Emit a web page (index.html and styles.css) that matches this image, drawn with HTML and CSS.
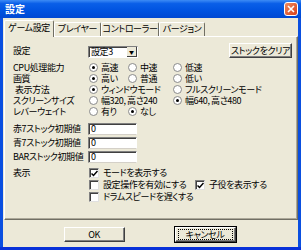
FILE: index.html
```html
<!DOCTYPE html>
<html lang="ja">
<head>
    <meta charset="UTF-8">
    <title>設定</title>
    <link rel="stylesheet" href="styles.css">
</head>
<body>
    <div class="window">
        <div class="titlebar">
            <span class="title">設定</span>
            <span class="close">
                <svg width="8" height="8" viewBox="0 0 8 8"><path d="M1 1L7 7M7 1L1 7" stroke="#fff" stroke-width="1.6"/></svg>
            </span>
        </div>
        <div class="content">
            <div class="tabs">
                <div class="tab active w1">ゲーム設定</div>
                <div class="tab w2">プレイヤー</div>
                <div class="tab w3">コントローラー</div>
                <div class="tab w4">バージョン</div>
            </div>
            <div class="panel">
                <div class="row top">
                    <span class="label">設定</span>
                    <span class="combo"><span class="combo-text">設定3</span><span class="combo-btn">▼</span></span>
                    <span class="btn clear">ストックをクリア</span>
                </div>

                <div class="radios">
                    <div class="row r">
                        <span class="label">CPU処理能力</span>
                        <span class="opt c1"><i class="radio on"></i>高速</span>
                        <span class="opt c2"><i class="radio"></i>中速</span>
                        <span class="opt"><i class="radio"></i>低速</span>
                    </div>
                    <div class="row r">
                        <span class="label">画質</span>
                        <span class="opt c1"><i class="radio on"></i>高い</span>
                        <span class="opt c2"><i class="radio"></i>普通</span>
                        <span class="opt"><i class="radio"></i>低い</span>
                    </div>
                    <div class="row r">
                        <span class="label ind">表示方法</span>
                        <span class="opt c12"><i class="radio on"></i>ウィンドウモード</span>
                        <span class="opt"><i class="radio"></i>フルスクリーンモード</span>
                    </div>
                    <div class="row r">
                        <span class="label">スクリーンサイズ</span>
                        <span class="opt c12"><i class="radio"></i>幅320, 高さ240</span>
                        <span class="opt"><i class="radio on"></i>幅640, 高さ480</span>
                    </div>
                    <div class="row r">
                        <span class="label">レバーウェイト</span>
                        <span class="opt c1"><i class="radio"></i>有り</span>
                        <span class="opt"><i class="radio on"></i>なし</span>
                    </div>
                </div>

                <div class="inputs">
                    <div class="row in">
                        <span class="label">赤7ストック初期値</span>
                        <span class="field">0</span>
                    </div>
                    <div class="row in">
                        <span class="label">青7ストック初期値</span>
                        <span class="field">0</span>
                    </div>
                    <div class="row in">
                        <span class="label">BARストック初期値</span>
                        <span class="field">0</span>
                    </div>
                </div>

                <div class="checks">
                    <div class="row ck">
                        <span class="label">表示</span>
                        <span class="opt"><i class="check on"><svg width="7" height="7" viewBox="0 0 7 7"><path d="M0.5 3.5L2.5 5.5L6.5 1" stroke="#000" stroke-width="1.5" fill="none"/></svg></i>モードを表示する</span>
                    </div>
                    <div class="row ck">
                        <span class="label"></span>
                        <span class="opt c-wide"><i class="check"></i>設定操作を有効にする</span>
                        <span class="opt"><i class="check on"><svg width="7" height="7" viewBox="0 0 7 7"><path d="M0.5 3.5L2.5 5.5L6.5 1" stroke="#000" stroke-width="1.5" fill="none"/></svg></i>子役を表示する</span>
                    </div>
                    <div class="row ck">
                        <span class="label"></span>
                        <span class="opt"><i class="check"></i>ドラムスピードを遅くする</span>
                    </div>
                </div>
            </div>
            <div class="buttons">
                <span class="btn ok">OK</span>
                <span class="btn cancel"><span class="focus">キャンセル</span></span>
            </div>
        </div>
    </div>
</body>
</html>
```

FILE: styles.css
```css
body {
    margin: 0;
    width: 301px;
    height: 250px;
    overflow: hidden;
    font-family: "Noto Sans CJK JP", "Liberation Sans", sans-serif;
    font-size: 9px;
    line-height: 10px;
    letter-spacing: -0.4px;
    white-space: nowrap;
    font-feature-settings: "palt";
    color: #000;
}
.window {
    width: 301px;
    height: 250px;
    box-sizing: border-box;
    background-color: #0a4fe0;
    border-bottom: 3px solid #0831d9;
    display: flex;
    flex-direction: column;
}
.titlebar {
    height: 18px;
    flex-shrink: 0;
    display: flex;
    align-items: center;
    justify-content: space-between;
    padding: 0 3px 0 5px;
    background: linear-gradient(#3d8cf5 0%, #0a5fe8 20%, #0053e0 60%, #0048d2 100%);
}
.title {
    color: #fff;
    font-weight: bold;
    font-size: 10px;
    letter-spacing: 0;
}
.close {
    width: 14px;
    height: 14px;
    box-sizing: border-box;
    border: 1px solid #fff;
    border-radius: 3px;
    background: linear-gradient(135deg, #f08a5e, #d8401a);
    display: flex;
    align-items: center;
    justify-content: center;
}
.content {
    flex: 1;
    margin: 0 3px;
    background-color: #ece9d8;
    padding: 2px 1px 0 1px;
    display: flex;
    flex-direction: column;
}

/* tabs */
.tabs {
    display: flex;
    align-items: flex-end;
    height: 16px;
    flex-shrink: 0;
    position: relative;
    z-index: 1;
}
.tab {
    height: 14px;
    box-sizing: border-box;
    border-top: 1px solid #fff;
    border-left: 1px solid #fff;
    border-right: 1px solid #716f64;
    border-radius: 2px 2px 0 0;
    text-align: center;
    line-height: 12px;
    overflow: hidden;
}
.tab.active {
    height: 17px;
    margin-bottom: -1px;
    background-color: #ece9d8;
    line-height: 14px;
}
.w1 { width: 50px; }
.w2 { width: 47px; }
.w3 { width: 58px; }
.w4 { width: 46px; }

.panel {
    height: 184px;
    flex-shrink: 0;
    box-sizing: border-box;
    width: 294px;
    border-top: 1px solid #fff;
    border-left: 1px solid #fff;
    border-right: 1px solid #716f64;
    border-bottom: 1px solid #716f64;
    box-shadow: inset -1px -1px #aca899;
    padding: 6px 5px 0 8px;
}
.row {
    display: flex;
    align-items: center;
}
.label {
    width: 75px;
    flex-shrink: 0;
}
.label.ind { padding-left: 2px; width: 73px; }
.top { height: 15px; }
.combo {
    margin-top: 2px;
    width: 50px;
    height: 12px;
    box-sizing: border-box;
    background-color: #fff;
    border-top: 1px solid #808080;
    border-left: 1px solid #808080;
    border-right: 1px solid #fff;
    border-bottom: 1px solid #fff;
    box-shadow: inset 1px 1px #404040;
    display: flex;
    align-items: center;
    justify-content: space-between;
}
.combo-text { padding-left: 2px; line-height: 10px; }
.combo-btn {
    width: 10px;
    height: 10px;
    box-sizing: border-box;
    background-color: #ece9d8;
    border-right: 1px solid #404040;
    border-bottom: 1px solid #404040;
    font-size: 5px;
    line-height: 9px;
    letter-spacing: 0;
    text-align: center;
}
.btn {
    box-sizing: border-box;
    background-color: #ece9d8;
    border-top: 1px solid #fff;
    border-left: 1px solid #fff;
    border-right: 1px solid #404040;
    border-bottom: 1px solid #404040;
    box-shadow: inset -1px -1px #808080;
    display: flex;
    align-items: center;
    justify-content: center;
}
.clear {
    margin-left: auto;
    width: 63px;
    height: 15px;
}

.radios { margin-top: 4px; }
.r { height: 11px; }
.opt {
    display: flex;
    align-items: center;
}
.c1 { width: 39px; }
.c2 { width: 45px; }
.c12 { width: 84px; }
.radio {
    width: 9px;
    height: 9px;
    flex-shrink: 0;
    box-sizing: border-box;
    border-radius: 50%;
    border: 1px solid #8a8a8a;
    background-color: #fff;
    margin: 0 3px 0 1px;
    position: relative;
}
.radio.on::after {
    content: "";
    position: absolute;
    left: 2px;
    top: 2px;
    width: 3px;
    height: 3px;
    border-radius: 50%;
    background-color: #000;
}

.inputs { margin-top: 5px; }
.in { height: 14px; }
.field {
    width: 49px;
    height: 12px;
    box-sizing: border-box;
    background-color: #fff;
    border-top: 1px solid #808080;
    border-left: 1px solid #808080;
    border-right: 1px solid #fff;
    border-bottom: 1px solid #d4d0c8;
    box-shadow: inset 1px 1px #404040;
    padding-left: 2px;
    line-height: 10px;
}

.checks { margin-top: 3px; }
.ck { height: 12px; }
.c-wide { width: 106px; }
.check {
    width: 10px;
    height: 10px;
    flex-shrink: 0;
    box-sizing: border-box;
    background-color: #fff;
    border-top: 1px solid #808080;
    border-left: 1px solid #808080;
    border-right: 1px solid #e0e0e0;
    border-bottom: 1px solid #e0e0e0;
    box-shadow: inset 1px 1px #404040;
    margin: 0 4px 0 1px;
    display: flex;
    align-items: center;
    justify-content: center;
}

.buttons {
    flex: 1;
    display: flex;
    justify-content: center;
    align-items: flex-start;
    gap: 50px;
    padding-top: 7px;
    padding-right: 2px;
}
.ok, .cancel {
    width: 61px;
    height: 15px;
}
.cancel {
    outline: 1px solid #000;
}
.focus {
    width: 55px;
    height: 11px;
    box-sizing: border-box;
    border: 1px dotted #000;
    text-align: center;
    line-height: 9px;
}
```
